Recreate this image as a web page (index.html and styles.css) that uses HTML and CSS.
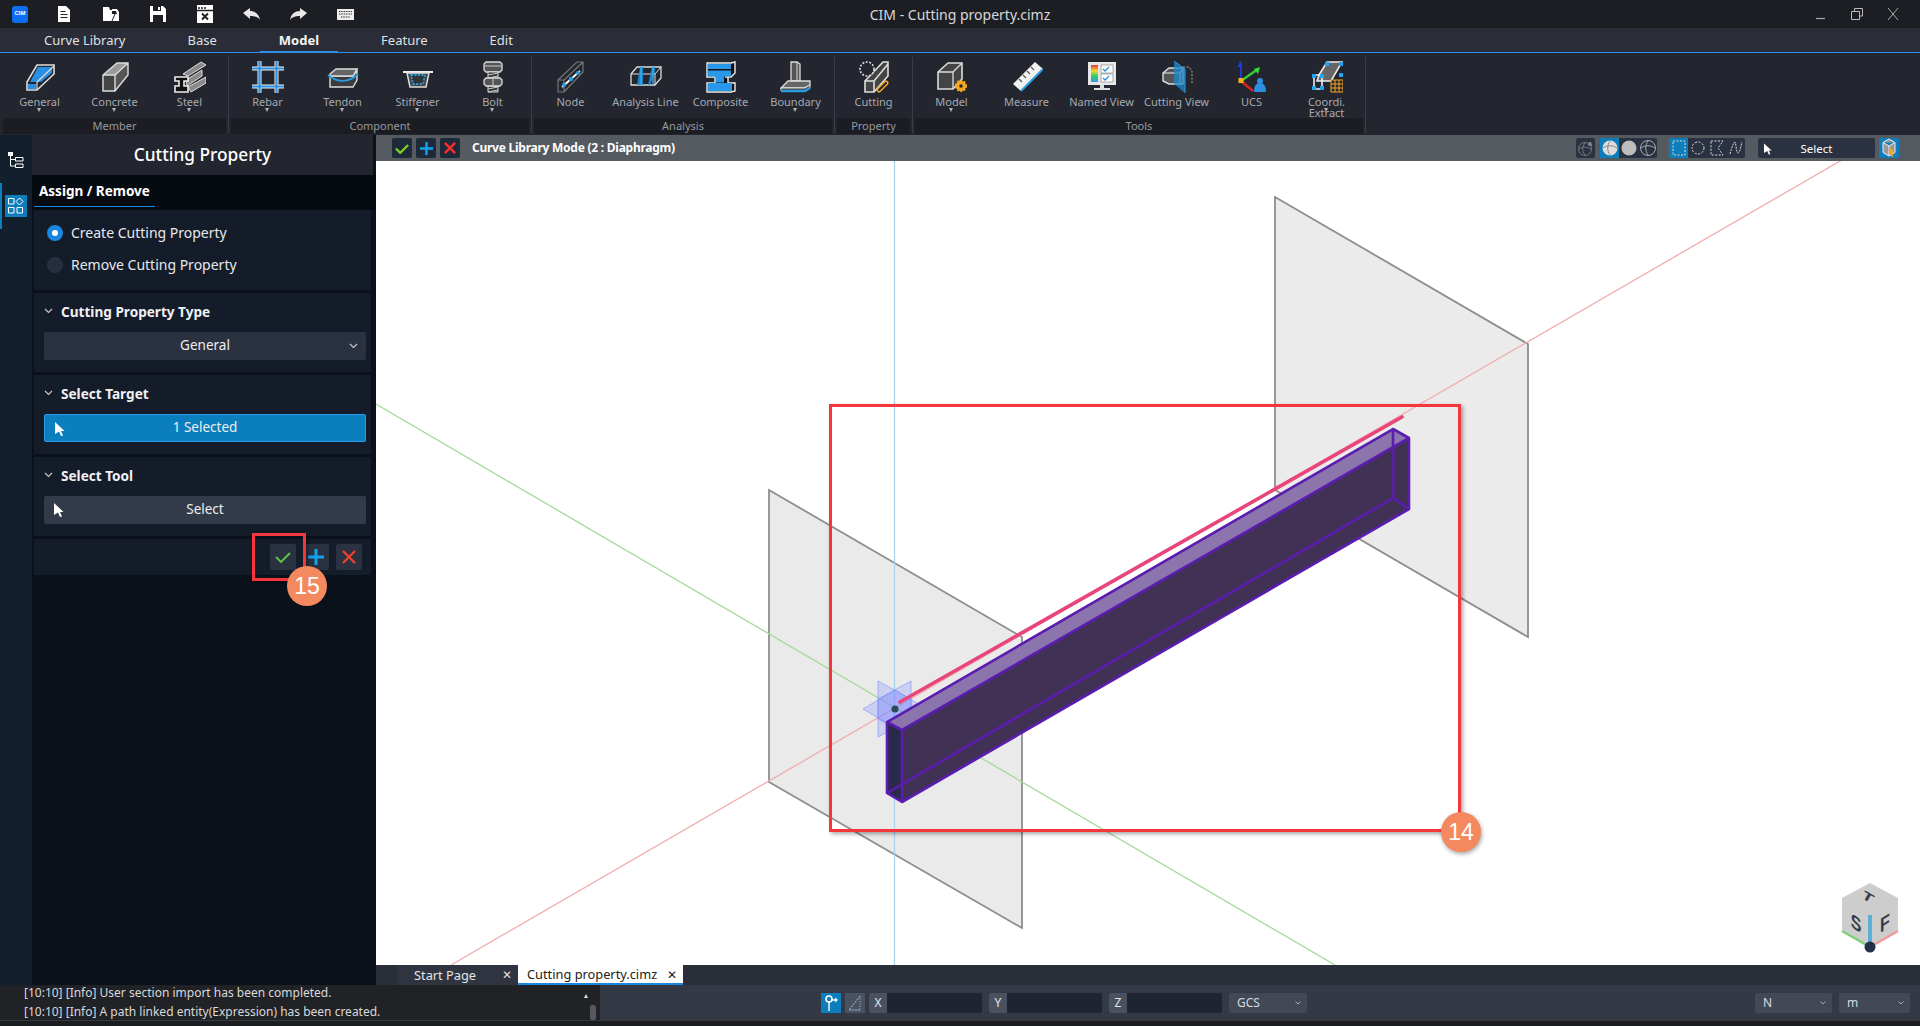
FILE: index.html
```html
<!DOCTYPE html>
<html lang="en">
<head>
<meta charset="utf-8">
<title>CIM - Cutting property.cimz</title>
<link rel="stylesheet" href="styles.css">
</head>
<body>
<div class="app">
  <header class="titlebar">
    <div class="qa">
      <span class="qa-btn"><span class="logo">CIM</span></span>
      <span class="qa-btn"><svg width="16" height="18" viewBox="0 0 16 18"><path d="M2 1h8l4 4v12H2z" fill="#fff"/><path d="M4.5 6.5h5M4.5 9.5h7M4.5 12.5h7" stroke="#222" stroke-width="1.2"/></svg></span>
      <span class="qa-btn"><svg width="18" height="18" viewBox="0 0 18 18"><path d="M1 2h6l1 3h2v11H1z" fill="#fff"/><path d="M10 4h5l2 3v9H7l3-7h5l-1-3h-4z" fill="#fff"/><path d="M10 16l3-7" stroke="#222"/></svg></span>
      <span class="qa-btn"><svg width="18" height="18" viewBox="0 0 18 18"><path d="M1 1h13l3 3v13H1z" fill="#fff"/><path d="M4 1h8v5H4zM4 10h10v7H4z" fill="#1e2026"/><path d="M9 2h2v3H9z" fill="#fff"/></svg></span>
      <span class="qa-btn"><svg width="18" height="18" viewBox="0 0 18 18"><path d="M1 0h16v18H1z" fill="#fff"/><path d="M2 3h2M5 3h2M8 3h2M1 5.5h16" stroke="#1e2026" stroke-width="1.4"/><path d="M6 8.5l6 6M12 8.5l-6 6" stroke="#222" stroke-width="2"/></svg></span>
      <span class="qa-btn"><svg width="17" height="12" viewBox="0 0 17 12"><path d="M0 5l7-5v3c5 0 9 3 10 9-2-3-5-4-10-4v3z" fill="#e8e8e8"/></svg></span>
      <span class="qa-btn"><svg width="17" height="12" viewBox="0 0 17 12"><path d="M17 5l-7-5v3C5 3 1 6 0 12c2-3 5-4 10-4v3z" fill="#e8e8e8"/></svg></span>
      <span class="qa-btn"><svg width="17" height="11" viewBox="0 0 17 11"><rect width="17" height="11" fill="#eee"/><path d="M2 2.5h13M2 5h13M4 8h9" stroke="#222" stroke-width="1.1" stroke-dasharray="1 .7"/></svg></span>
    </div>
    <div class="title-text">CIM - Cutting property.cimz</div>
    <div class="winctl">
      <svg width="12" height="12" viewBox="0 0 12 12"><path d="M1 10.5h9" stroke="#aaa" stroke-width="1.2"/></svg>
      <svg width="12" height="12" viewBox="0 0 12 12"><path d="M3.5 3V.5h8V8H8.5M.5 3.5h8v8h-8z" fill="none" stroke="#bbb"/></svg>
      <svg width="12" height="14" viewBox="0 0 12 14"><path d="M1 1l10 12M11 1L1 13" stroke="#aaa"/></svg>
    </div>
  </header>

  <nav class="tabs">
    <span class="tab">Curve Library</span>
    <span class="tab">Base</span>
    <span class="tab tab-active">Model</span>
    <span class="tab">Feature</span>
    <span class="tab">Edit</span>
  </nav>

  <section class="ribbon">
    <div class="group">
      <div class="items">
        <div class="item"><svg width="32" height="32" viewBox="0 0 32 32"><path d="M3 29V21L13 4h17v9L13 29z" fill="none" stroke="#ddd" stroke-width="1.6"/><path d="M14 6h14v6L17 21H6z" fill="#2a8fe0"/><path d="M4 23h8v5H4z" fill="#2a8fe0"/><path d="M13 29V21L30 5" fill="none" stroke="#ddd" stroke-width="1.2"/></svg><span class="label">General</span><i class="arrow"></i></div>
        <div class="item"><svg width="32" height="32" viewBox="0 0 32 32"><path d="M4 14L18 2h11L16 14z" fill="#9a9a9a"/><path d="M16 14L29 2v12L16 30z" fill="#555"/><path d="M4 14h12v16H4z" fill="#444"/><path d="M4 30V14L18 2h11v12L16 30zM4 14h12L29 2M16 14v16" fill="none" stroke="#ddd" stroke-width="1.4"/></svg><span class="label">Concrete</span><i class="arrow"></i></div>
        <div class="item"><svg width="32" height="32" viewBox="0 0 32 32"><path d="M9 13L27 1l5 3-18 11zM12 19l16-10v6L13 25zM14 26l18-10v6L17 31z" fill="#8a8a8a" stroke="#ddd"/><path d="M1 16h13v4h-4v5h4v6H1v-6h4v-5H1z" fill="#111" stroke="#eee" stroke-width="1.6"/></svg><span class="label">Steel</span><i class="arrow"></i></div>
      </div>
      <div class="glabel">Member</div>
    </div>
    <div class="group">
      <div class="items">
        <div class="item"><svg width="32" height="32" viewBox="0 0 32 32"><path d="M1 7.500h30M1 25.500h30M7.500 1v30M24.500 1v30" stroke="#eee" stroke-width="4" stroke-linecap="round"/><path d="M1 7.500h30M1 25.500h30M7.500 1v30M24.500 1v30" stroke="#2a8fe0" stroke-width="2.200" stroke-linecap="round"/></svg><span class="label">Rebar</span><i class="arrow"></i></div>
        <div class="item"><svg width="32" height="32" viewBox="0 0 32 32"><path d="M3 15V26H26l4-7V9L26 15z" fill="#3a3a3f" stroke="#ddd" stroke-width="1.4"/><path d="M3 13L9 8h21l-4 7H3z" fill="#666" stroke="#ddd" stroke-width="1.4"/><path d="M1 14c9 8 21 8 30-1" fill="none" stroke="#2a9be0" stroke-width="1.800"/></svg><span class="label">Tendon</span><i class="arrow"></i></div>
        <div class="item"><svg width="32" height="32" viewBox="0 0 32 32"><path d="M1 10h30v2H1z" fill="#eee"/><path d="M5 12h22l-3 14H8z" fill="#444" stroke="#ddd" stroke-width="1.5"/><path d="M9 14h14l-2 9h-10z" fill="#333" stroke="#2a9be0" stroke-width="1.800" stroke-dasharray="2 1.500"/></svg><span class="label">Stiffener</span><i class="arrow"></i></div>
        <div class="item"><svg width="32" height="32" viewBox="0 0 32 32"><path d="M9 1h14l2 2v6l-2 2H9L7 9V3z" fill="#555" stroke="#ddd" stroke-width="1.300"/><path d="M11 11h10v8H11zM11 25h10v6H11z" fill="#333" stroke="#ddd"/><path d="M11 14l10-2M11 17l10-2M11 28l10-2M11 31l10-2" stroke="#ccc"/><path d="M9 17h14l2 2v4l-2 2H9l-2-2v-4z" fill="#555" stroke="#ddd" stroke-width="1.300"/><path d="M16 17v8M7 5h18" stroke="#ccc"/></svg><span class="label">Bolt</span><i class="arrow"></i></div>
      </div>
      <div class="glabel">Component</div>
    </div>
    <div class="group">
      <div class="items">
        <div class="item"><svg width="32" height="32" viewBox="0 0 32 32"><path d="M3 19L22 1h6v10L9 31H3zM3 19h6v12M9 19L28 1" fill="none" stroke="#777" stroke-width="1.200"/><path d="M7 26L25 10" stroke="#fff" stroke-width="1.800"/><circle cx="9" cy="24" r="2" fill="#2a9be0"/><circle cx="16" cy="18" r="2.300" fill="#2a9be0"/><circle cx="23" cy="12" r="2" fill="#2a9be0"/></svg><span class="label">Node</span></div>
        <div class="item"><svg width="32" height="32" viewBox="0 0 32 32"><path d="M1 13L7 6h24v11l-6 7H1z" fill="none" stroke="#ddd" stroke-width="1.300"/><path d="M1 13h24v11M25 13L31 6" fill="none" stroke="#ddd"/><path d="M10 6h3v18h-6zM22 6h3v6l-5 12h-2z" fill="#1c90d8" opacity=".9"/><path d="M11 6v18M23 6v18" stroke="#3ab0f0" stroke-width="1.300"/></svg><span class="label">Analysis Line</span></div>
        <div class="item"><svg width="32" height="32" viewBox="0 0 32 32"><path d="M2 2h24l4-1v11l-4 4h-6l3 0v6h7v8l-4 1H2V22h8v-6H2z" fill="#111" stroke="#eee" stroke-width="1.400"/><path d="M3 3h23v5H3zM3 9.500h23v6H3zM11 15.500h8v6h-8zM3 22h24v8H3z" fill="#2a98e8"/></svg><span class="label">Composite</span></div>
        <div class="item"><svg width="32" height="32" viewBox="0 0 32 32"><path d="M11 1h6l3 2v17h-9z" fill="#555" stroke="#ddd" stroke-width="1.300"/><path d="M17 1v19" stroke="#ddd"/><path d="M1 27l7-7h22v4l-6 3z" fill="#666" stroke="#ddd" stroke-width="1.300"/><path d="M1 27h24l5-3v3l-5 3H1z" fill="#444" stroke="#ddd"/><path d="M1 30h24l5-3" fill="none" stroke="#2a9be0" stroke-width="2.500"/></svg><span class="label">Boundary</span><i class="arrow"></i></div>
      </div>
      <div class="glabel">Analysis</div>
    </div>
    <div class="group">
      <div class="items">
        <div class="item"><svg width="32" height="32" viewBox="0 0 32 32"><path d="M7 20h9v11H7zM7 20L25 1h5v14L16 31M16 20L30 3" fill="#444" stroke="#ddd" stroke-width="1.600"/><circle cx="9" cy="8" r="7" fill="#23262e" stroke="#ddd" stroke-width="1.600" stroke-dasharray="2 1.500"/><path d="M21 29l7-7" stroke="#f5a623" stroke-width="5" stroke-linecap="round"/><path d="M21 29l7-7" stroke="#23262e" stroke-width="2" stroke-linecap="round"/></svg><span class="label">Cutting</span></div>
      </div>
      <div class="glabel">Property</div>
    </div>
    <div class="group">
      <div class="items">
        <div class="item"><svg width="32" height="32" viewBox="0 0 32 32"><path d="M2 11L12 2h14v16L17 28H2z" fill="#444" stroke="#ddd" stroke-width="1.600"/><path d="M2 11h15v17M17 11L26 2" fill="none" stroke="#ddd" stroke-width="1.300"/><circle cx="25" cy="25" r="5" fill="#f5a623" stroke="#f5a623" stroke-width="2" stroke-dasharray="2 1.200"/><circle cx="25" cy="25" r="4.500" fill="#f5a623"/><circle cx="25" cy="25" r="1.800" fill="#23262e"/></svg><span class="label">Model</span><i class="arrow"></i></div>
        <div class="item"><svg width="32" height="32" viewBox="0 0 32 32"><path d="M2 23L24 1l8 7-22 22z" fill="#f2f2f2"/><path d="M10 30L32 8" stroke="#2a9be0" stroke-width="2"/><path d="M8 18l3 3M12 14l3 3M16 10l3 3M20 6l3 3" stroke="#555" stroke-width="1.200"/></svg><span class="label">Measure</span></div>
        <div class="item"><svg width="32" height="32" viewBox="0 0 32 32"><path d="M2 1h28v23H2z" fill="#e8e8e8"/><path d="M5 4h7v17H5z" fill="url(#rb)"/><path d="M15 4h12v8H15zM15 13h12v8H15z" fill="#fff" stroke="#777" stroke-width=".6"/><path d="M17 8l2 2 4-4M17 17l2 2 4-4" fill="none" stroke="#2a8fe0" stroke-width="1.300"/><path d="M14 24h4v3h-4zM8 27h16v2H8z" fill="#ddd"/><defs><linearGradient id="rb" x1="0" x2="0" y1="0" y2="1"><stop offset="0" stop-color="#e33"/><stop offset=".35" stop-color="#ed3"/><stop offset=".65" stop-color="#3c6"/><stop offset="1" stop-color="#39e"/></linearGradient></defs></svg><span class="label">Named View</span></div>
        <div class="item"><svg width="32" height="32" viewBox="0 0 32 32"><path d="M2 12l6-5h14v16H8l-6-3z" fill="#555" stroke="#ddd" stroke-width="1.400"/><path d="M2 12h17v12M19 12l3-5" fill="none" stroke="#eee"/><path d="M22 6h6l3 4v12" fill="none" stroke="#aaa" stroke-dasharray="2 1.500"/><path d="M13 0l11 8v24l-11-9z" fill="#1d88cc" opacity=".75"/><path d="M13 0l11 8v24" fill="none" stroke="#2a9be0"/></svg><span class="label">Cutting View</span></div>
        <div class="item"><svg width="32" height="32" viewBox="0 0 32 32"><path d="M5 20V1" stroke="#1a3ad8" stroke-width="2"/><path d="M4 0l2.500 6h-5z" fill="#1a3ad8"/><path d="M5 20L22 8" stroke="#3c3" stroke-width="2.500"/><path d="M24 6l-2 7-4-5z" fill="#3d3"/><path d="M5 20l12 10" stroke="#d22" stroke-width="2.500"/><rect x="2.500" y="17" width="5" height="5" fill="#f5b016"/><circle cx="24" cy="20" r="3" fill="#2a8fe0"/><path d="M18 31c0-6 2-9 6-9s6 3 6 9z" fill="#2a8fe0"/></svg><span class="label">UCS</span></div>
        <div class="item"><svg width="32" height="32" viewBox="0 0 32 32"><path d="M8 14L16 1h15L20 20H6z" fill="#666" stroke="#eee" stroke-width="1.600"/><path d="M3 14h8v14H3z" fill="none" stroke="#eee" stroke-width="1.600"/><path d="M14 1h4v4h-4zM28 1h4v4h-4zM28 12h4v4h-4zM1 13h4v4H1zM9 13h4v4H9zM1 25h4v4H1zM9 25h4v4H9z" fill="#1da7f2"/><path d="M20 19h12v12H20z" fill="#23262e" stroke="#f5a623"/><path d="M20 23h12M20 27h12M24 19v12M28 19v12" stroke="#f5a623"/></svg><span class="label label-two">Coordi.<br>Extract</span><i class="arrow"></i></div>
      </div>
      <div class="glabel">Tools</div>
    </div>
  </section>

  <main class="main">
    <aside class="rail">
      <span class="rail-btn"><svg width="16" height="16" viewBox="0 0 16 16"><path d="M0 0h5v4H0z" fill="#fff"/><path d="M2.500 4v10H7M2.500 7.500H7" stroke="#fff" fill="none"/><path d="M7.500 5.500h7.500v3.500H7.500zM7.500 12h7.500v3.500H7.500z" fill="none" stroke="#fff"/></svg></span>
      <span class="rail-btn rail-active"><svg width="16" height="16" viewBox="0 0 16 16"><path d="M.5.500h5.500v5.500H.5zM.5 9.500h5.500v5.500H.5zM9 9.500h5.500v5.500H9z" fill="none" stroke="#fff"/><path d="M11.500 0l3.500 3.500-3.500 3.500L8 3.500z" fill="none" stroke="#fff"/></svg></span>
    </aside>
    <div class="panel">
      <div class="panel-head">Cutting Property</div>
      <div class="panel-tabs"><span class="panel-tab">Assign / Remove</span></div>
      <div class="sec sec-radio">
        <div class="radio-row"><i class="radio radio-on"></i><span>Create Cutting Property</span></div>
        <div class="radio-row"><i class="radio"></i><span>Remove Cutting Property</span></div>
      </div>
      <div class="sec">
        <div class="sec-title"><svg class="chev" width="9" height="6" viewBox="0 0 9 6"><path d="M1 1l3.500 3.500L8 1" fill="none" stroke="#ccc" stroke-width="1.100"/></svg>Cutting Property Type</div>
        <div class="ctl ctl-select">General<svg class="chev-r" width="9" height="6" viewBox="0 0 9 6"><path d="M1 1l3.500 3.500L8 1" fill="none" stroke="#ccc" stroke-width="1.100"/></svg></div>
      </div>
      <div class="sec">
        <div class="sec-title"><svg class="chev" width="9" height="6" viewBox="0 0 9 6"><path d="M1 1l3.500 3.500L8 1" fill="none" stroke="#ccc" stroke-width="1.100"/></svg>Select Target</div>
        <div class="ctl ctl-active"><svg class="cursor" width="10" height="14" viewBox="0 0 10 14"><path d="M0 0l9.500 9H6l2 4.500-2 .5-2-4.500L0 12z" fill="#fff"/></svg>1 Selected</div>
      </div>
      <div class="sec">
        <div class="sec-title"><svg class="chev" width="9" height="6" viewBox="0 0 9 6"><path d="M1 1l3.500 3.500L8 1" fill="none" stroke="#ccc" stroke-width="1.100"/></svg>Select Tool</div>
        <div class="ctl ctl-plain"><svg class="cursor" width="10" height="14" viewBox="0 0 10 14"><path d="M0 0l9.500 9H6l2 4.500-2 .5-2-4.500L0 12z" fill="#fff"/></svg>Select</div>
      </div>
      <div class="sec-actions">
        <span class="act"><svg width="16" height="12" viewBox="0 0 16 12"><path d="M1 6l5 5 9-9" fill="none" stroke="#5cc245" stroke-width="2"/></svg></span>
        <span class="act"><svg width="16" height="16" viewBox="0 0 16 16"><path d="M8 0v16M0 8h16" stroke="#12a3ee" stroke-width="3"/></svg></span>
        <span class="act"><svg width="14" height="14" viewBox="0 0 14 14"><path d="M1 1l12 12M13 1L1 13" stroke="#f0402c" stroke-width="2.400"/></svg></span>
      </div>
    </div>
    <div class="work">
      <div class="vbar">
        <span class="vbtn"><svg width="14" height="11" viewBox="0 0 16 12"><path d="M1 6l5 5 9-9" fill="none" stroke="#7ed321" stroke-width="2.600"/></svg></span>
        <span class="vbtn"><svg width="13" height="13" viewBox="0 0 16 16"><path d="M8 0v16M0 8h16" stroke="#12a3ee" stroke-width="3"/></svg></span>
        <span class="vbtn"><svg width="12" height="12" viewBox="0 0 14 14"><path d="M1 1l12 12M13 1L1 13" stroke="#f0302c" stroke-width="3"/></svg></span>
        <span class="vtitle">Curve Library Mode (2 : Diaphragm)</span>
        <span class="vright">
          <span class="vbox vb1"><svg width="16" height="16" viewBox="0 0 16 16"><circle cx="7" cy="9" r="6.500" fill="none" stroke="#777"/><path d="M1 9c4-3 8-2 12 0M7 3c-3 4-3 8 0 12" fill="none" stroke="#777"/><text x="10" y="6" class="svg-a">A</text></svg></span>
          <span class="vbox vb2">
            <span class="vcell vcell-on"><svg width="16" height="16" viewBox="0 0 16 16"><circle cx="8" cy="8" r="7.500" fill="#ddd"/><path d="M1 8c4-3 10-3 14 0M8 1c-3 4-3 10 0 14" fill="none" stroke="#888"/></svg></span>
            <span class="vcell"><svg width="16" height="16" viewBox="0 0 16 16"><circle cx="8" cy="8" r="7.500" fill="#bdbdbd"/></svg></span>
            <span class="vcell"><svg width="16" height="16" viewBox="0 0 16 16"><circle cx="8" cy="8" r="7.500" fill="none" stroke="#aaa"/><path d="M1 8c4-3 10-3 14 0M8 1c-3 4-3 10 0 14" fill="none" stroke="#aaa"/></svg></span>
          </span>
          <span class="vbox vb3">
            <span class="vcell vcell-on"><svg width="14" height="16" viewBox="0 0 14 16"><rect x="1" y="1" width="12" height="14" fill="none" stroke="#ddd" stroke-dasharray="2 1.500"/></svg></span>
            <span class="vcell"><svg width="14" height="16" viewBox="0 0 14 16"><circle cx="7" cy="8" r="6" fill="none" stroke="#ddd" stroke-dasharray="2 1.500"/></svg></span>
            <span class="vcell"><svg width="14" height="16" viewBox="0 0 14 16"><path d="M1 1h12L8 8l5 7H1z" fill="none" stroke="#ddd" stroke-dasharray="2 1.500"/></svg></span>
            <span class="vcell"><svg width="14" height="16" viewBox="0 0 14 16"><path d="M1 14C3 6 5 2 6 2s1 11 3 11 3-8 4-11" fill="none" stroke="#ddd" stroke-dasharray="2 1"/></svg></span>
          </span>
          <span class="vbox vb4"><svg class="vb4-cur" width="8" height="12" viewBox="0 0 10 14"><path d="M0 0l9.500 9H6l2 4.500-2 .5-2-4.500L0 12z" fill="#fff"/></svg>Select</span>
          <span class="vbox vb5"><svg width="14" height="20" viewBox="0 0 14 20"><path d="M7 1l6 3.500v10L7 18l-6-3.500v-10zM1 4.500l6 3.500 6-3.500M7 8v10" fill="#999" stroke="#eee"/><path d="M7 9l6 6-3 .5 1.500 3-1.500.5-1.500-3L7 17z" fill="#f5a623"/></svg></span>
        </span>
      </div>
      <div class="canvas">
        <svg class="scene" viewBox="376 161 1544 804" preserveAspectRatio="none">
          <path d="M1275 197L1528 344V637L1275 490z" fill="#dedede" fill-opacity=".6" stroke="#8e8e8e" stroke-width="1.800"/>
          <path d="M769 490L1022 637V928L769 782z" fill="#d8d8d8" fill-opacity=".55" stroke="#8e8e8e" stroke-width="1.800"/>
          <path d="M451 965L1847 157" stroke="#f2adad" stroke-width="1.300"/>
          <path d="M376 404L1335 965" stroke="#a6d99c" stroke-width="1.300"/>
          <path d="M894.500 161V965" stroke="#a9d5ec" stroke-width="1.300"/>
          <g fill="#7f8cff" fill-opacity=".28" stroke="#7f8cff" stroke-opacity=".6">
            <path d="M878 681L911 699V737L878 719z"/>
            <path d="M911 681L878 699V737L911 719z"/>
            <path d="M863 709L895 690L927 709L895 728z"/>
          </g>
          <path d="M900 702L1402 417" stroke="#e8457b" stroke-width="3.600" stroke-linecap="round"/>
          <circle cx="895" cy="709" r="3.500" fill="#2c4a58"/>
          <path d="M887 722L1393 429L1409 438L902 730z" fill="#8c74ac"/>
          <path d="M902 730L1409 438V509L902 802z" fill="#413155"/>
          <path d="M887 722L902 730V802L887 793z" fill="#2a2a4c"/>
          <path d="M1393 429L1409 438V509L1393 498z" fill="#413155"/>
          <path d="M1393 429L1409 438L1393 447z" fill="#8c74ac"/>
          <path d="M887 722L1393 429L1409 438V509L902 802L887 793zM887 722L902 730V802M887 793L1393 498V429M902 730L1409 438M1393 498L1409 509" fill="none" stroke="#5a1db0" stroke-width="2.600" stroke-linejoin="round"/>
          <path d="M1870 883L1898 898V932L1870 947L1842 932V898z" fill="#cdcdcd"/>
          <path d="M1842 931L1870 947" stroke="#7fd07a" stroke-width="2.500"/>
          <path d="M1898 931L1870 947" stroke="#f29a9a" stroke-width="2.500"/>
          <path d="M1870 915V947" stroke="#5cb0d8" stroke-width="4"/>
          <circle cx="1870" cy="947" r="5.500" fill="#22304a"/>
          <text class="cube-t cube-top" transform="translate(1868 897) rotate(30) scale(1.300 .8) translate(0 5)">T</text>
          <text class="cube-t" transform="matrix(.8 .5 0 1 1856 930)">S</text>
          <text class="cube-t" transform="matrix(.8 -.5 0 1 1885 930)">F</text>
        </svg>
      </div>
      <div class="doc-tabs">
        <span class="doc-tab">Start Page<i class="doc-x">✕</i></span>
        <span class="doc-tab doc-on">Cutting property.cimz<i class="doc-x">✕</i></span>
      </div>
    </div>
  </main>

  <footer class="status">
    <div class="log">
      <div class="log-line">[10:10] [Info] User section import has been completed.</div>
      <div class="log-line">[10:10] [Info] A path linked entity(Expression) has been created.</div>
      <i class="log-up"></i><i class="log-thumb"></i>
    </div>
    <div class="coords">
      <span class="snap snap-on"><svg width="14" height="18" viewBox="0 0 14 18"><circle cx="5" cy="5" r="3" fill="none" stroke="#fff" stroke-width="1.600"/><path d="M5 8v9M8 6h5" stroke="#fff" stroke-width="1.400"/><path d="M11 3.500L14 6l-3 2.500z" fill="#fff"/></svg></span>
      <span class="snap"><svg width="14" height="18" viewBox="0 0 14 18"><path d="M12 2L1 16h11" fill="none" stroke="#9bc3e6" stroke-dasharray="2 1"/><path d="M12 2v14" stroke="#9bc3e6" stroke-dasharray="1 1.500"/></svg></span>
      <span class="field"><b>X</b></span>
      <span class="field"><b>Y</b></span>
      <span class="field"><b>Z</b></span>
      <span class="drop drop-gcs">GCS<svg class="drop-c" width="6" height="4" viewBox="0 0 6 4"><path d="M.5.500L3 3 5.500.500" fill="none" stroke="#aaa"/></svg></span>
      <span class="spacer"></span>
      <span class="drop drop-n">N<svg class="drop-c" width="6" height="4" viewBox="0 0 6 4"><path d="M.5.500L3 3 5.500.500" fill="none" stroke="#aaa"/></svg></span>
      <span class="drop drop-m">m<svg class="drop-c" width="6" height="4" viewBox="0 0 6 4"><path d="M.5.500L3 3 5.500.500" fill="none" stroke="#aaa"/></svg></span>
    </div>
  </footer>
  <div class="foot-strip"></div>

  <div class="mark mark-14"></div>
  <div class="mark mark-15"></div>
  <div class="badge badge-14">14</div>
  <div class="badge badge-15">15</div>
</div>
</body>
</html>
```

FILE: styles.css
```css
* { box-sizing: border-box; }
html, body { margin: 0; padding: 0; height: 100%; overflow: hidden; }
body { font-family: "Noto Sans", "Liberation Sans", sans-serif; color: #fff; background: #1e2026; }
svg { display: block; flex: none; }
.app { position: relative; width: 1920px; height: 1026px; display: flex; flex-direction: column; }

.titlebar { height: 28px; background: #1c1e24; display: flex; align-items: center; position: relative; }
.qa { display: flex; }
.qa-btn { width: 47px; height: 28px; display: flex; align-items: center; justify-content: center; }
.qa-btn:first-child { width: 40px; }
.logo { width: 16px; height: 17px; background: #0d6ff0; border-radius: 3px; font-size: 6px; font-weight: 700; text-align: center; line-height: 14px; font-family: "Liberation Sans", sans-serif; }
.title-text { position: absolute; left: 0; right: 0; text-align: center; font-size: 14px; color: #d8d8da; line-height: 31px; }
.winctl { margin-left: auto; display: flex; gap: 24px; padding-right: 21px; align-items: center; }

.tabs { height: 25px; background: #2a2d37; border-bottom: 1px solid #2f8fea; display: flex; padding-left: 13px; }
.tab { position: relative; padding: 0 31px; font-size: 13px; line-height: 25px; color: #dfe1e5; }
.tab-active { font-weight: 700; color: #f4f4f4; }
.tab-active::after { content: ""; position: absolute; left: 12px; right: 12px; bottom: -1px; height: 2px; background: #2f8fea; }

.ribbon { height: 82px; background: #23262f; display: flex; gap: 3px; padding-left: 2px; }
.group { display: flex; flex-direction: column; position: relative; }
.group::after { content: ""; position: absolute; right: -2px; top: 4px; bottom: 2px; width: 1px; background: #3a3d46; }
.items { display: flex; height: 65px; }
.item { width: 75px; position: relative; display: flex; flex-direction: column; align-items: center; padding-top: 8px; }
.label { font-size: 11px; line-height: 14px; margin-top: 2px; color: #a6a9b0; white-space: nowrap; }
.label-two { line-height: 11px; text-align: center; margin-top: 3px; }
.arrow { position: absolute; top: 55px; left: 35px; width: 0; height: 0; border-left: 2.5px solid transparent; border-right: 2.5px solid transparent; border-top: 4px solid #b0b3b8; }
.glabel { height: 16px; margin: 0 1px; background: #1b1d23; text-align: center; font-size: 11px; line-height: 16px; color: #96999f; }

.main { flex: 1; display: flex; min-height: 0; }
.rail { width: 32px; background: #12202e; display: flex; flex-direction: column; align-items: center; padding-top: 14px; }
.rail-btn { width: 22px; height: 22px; display: flex; align-items: center; justify-content: center; margin-bottom: 24px; }
.rail-active { background: #0e7dbb; position: relative; }
.rail-active::before { content: ""; position: absolute; left: -5px; top: -12px; bottom: -12px; width: 2px; background: #0e7dbb; }

.panel { width: 344px; background: #0b111b; }
.panel-head { width: 341px; height: 40px; background: #23262e; text-align: center; font-size: 17.3px; font-weight: 500; line-height: 40px; }
.panel-tabs { height: 35px; background: #060a11; padding-left: 2px; }
.panel-tab { display: inline-block; width: 121px; height: 32px; border-bottom: 1px solid #1b86e0; padding-left: 5px; font-size: 13.5px; font-weight: 700; line-height: 33px; white-space: nowrap; }
.sec { width: 337px; height: 79px; margin: 0 0 3px 2px; background: #141c2a; padding: 8px 5px 0 10px; }
.sec-radio { padding: 7px 0 0 13px; height: 80px; }
.radio-row { display: flex; align-items: center; height: 32px; font-size: 14px; line-height: 30px; color: #e6e8ec; }
.radio { width: 16px; height: 16px; border-radius: 50%; background: #262e3d; margin-right: 8px; border: 1px solid #2c3444; }
.radio-on { background: #fff; border: 5px solid #1b86e0; }
.sec-title { display: flex; align-items: center; height: 20px; font-size: 13.6px; font-weight: 700; color: #f0f1f3; }
.chev { margin: 0 8px 0 0; }
.ctl { position: relative; margin-top: 11px; height: 28px; border-radius: 2px; text-align: center; font-size: 13.5px; line-height: 26px; color: #edeef0; }
.ctl-select { background: #2a3242; }
.ctl-active { background: #0b7fbd; border: 1px solid #2c9bec; line-height: 25px; }
.ctl-plain { background: #333a4a; }
.chev-r { position: absolute; right: 8px; top: 11px; }
.cursor { position: absolute; left: 10px; top: 7px; }
.sec-actions { width: 337px; height: 36px; margin-left: 2px; background: #141c2a; display: flex; justify-content: flex-end; gap: 7px; padding: 5px 9px 0 0; }
.act { width: 26px; height: 26px; border-radius: 2px; background: #2a3242; display: flex; align-items: center; justify-content: center; }

.work { flex: 1; display: flex; flex-direction: column; min-width: 0; }
.vbar { height: 26px; background: #555a61; display: flex; align-items: center; padding-left: 16px; gap: 4px; }
.vbtn { width: 20px; height: 20px; background: #1e2a3a; border-radius: 2px; display: flex; align-items: center; justify-content: center; }
.vtitle { margin-left: 8px; font-size: 12px; line-height: 24px; font-weight: 700; letter-spacing: -.25px; white-space: nowrap; }
.vright { margin-left: auto; display: flex; padding-right: 21px; }
.vbox { height: 20px; background: #2a3242; border-radius: 2px; display: flex; align-items: center; justify-content: center; }
.vb1 { width: 19px; margin-right: 5px; }
.vb2 { width: 57px; margin-right: 12px; justify-content: flex-start; }
.vb3 { width: 76px; margin-right: 13px; justify-content: flex-start; }
.vcell { width: 19px; height: 20px; display: flex; align-items: center; justify-content: center; }
.vcell-on { background: #0e7dbb; }
.vb4 { width: 117px; margin-right: 4px; font-size: 11.5px; position: relative; }
.vb4-cur { position: absolute; left: 6px; top: 5px; }
.vb5 { width: 20px; background: #0e7dbb; }
.svg-a { font-size: 6px; fill: #aaa; font-weight: 700; }

.canvas { flex: 1; background: #fff; min-height: 0; }
.scene { width: 100%; height: 100%; }
.cube-t { font-family: "Liberation Sans", sans-serif; font-weight: 700; font-size: 20px; fill: #343a48; text-anchor: middle; }
.cube-top { font-size: 15px; }

.doc-tabs { height: 20px; background: #2a2e38; display: flex; padding-left: 21px; }
.doc-tab { width: 121px; height: 20px; background: #2f3440; font-size: 12.8px; line-height: 20px; padding-left: 17px; color: #e4e5e8; position: relative; white-space: nowrap; }
.doc-on { width: 165px; background: #fff; color: #222; padding-left: 9px; border-bottom: 2px solid #1b86e0; line-height: 19px; }
.doc-x { position: absolute; right: 6px; top: 0; font-style: normal; font-size: 12px; color: #ddd; }
.doc-on .doc-x { color: #222; }

.status { height: 35px; display: flex; }
.log { width: 600px; background: #212226; padding: 0 0 0 24px; position: relative; }
.log-line { height: 19px; font-size: 12px; line-height: 15px; color: #d8d9dc; white-space: nowrap; }
.log-up { position: absolute; left: 584px; top: 9px; width: 0; height: 0; border-left: 2.5px solid transparent; border-right: 2.5px solid transparent; border-bottom: 4px solid #ddd; }
.log-thumb { position: absolute; left: 590px; top: 20px; width: 6px; height: 15px; background: #55585e; border-radius: 2px; }
.coords { flex: 1; background: #333945; display: flex; align-items: center; padding-left: 221px; padding-right: 10px; }
.snap { width: 20px; height: 20px; background: #4a5260; margin-right: 4px; display: flex; align-items: center; justify-content: center; }
.snap-on { background: #0e7dbb; }
.field { width: 113px; height: 20px; background: #1f2530; margin-right: 7px; border-radius: 2px; overflow: hidden; display: block; }
.field b { display: block; width: 18px; height: 20px; background: #4a5260; text-align: center; font-size: 12px; font-weight: 400; line-height: 20px; color: #e5e6e9; }
.drop { height: 20px; background: #434954; border-radius: 2px; font-size: 12px; line-height: 20px; padding-left: 8px; color: #d5dbe4; position: relative; }
.drop-gcs { width: 78px; }
.drop-n { width: 77px; margin-right: 7px; }
.drop-m { width: 71px; }
.drop-c { position: absolute; right: 6px; top: 8px; }
.spacer { flex: 1; }
.foot-strip { height: 6px; background: #1c1d20; border-top: 1px solid #38393c; }

.mark { position: absolute; border: 3px solid #f4373b; box-shadow: 2px 2px 4px rgba(0,0,0,.35); }
.mark-14 { left: 829px; top: 404px; width: 632px; height: 428px; }
.mark-15 { left: 252px; top: 533px; width: 54px; height: 48px; }
.badge { position: absolute; width: 40px; height: 40px; border-radius: 50%; background: #f4895f; font-family: "Liberation Sans", sans-serif; font-size: 23px; line-height: 40px; text-align: center; color: #fff; }
.badge-14 { left: 1441px; top: 812px; box-shadow: 1px 2px 4px rgba(0,0,0,.35); }
.badge-15 { left: 287px; top: 566px; }
```
